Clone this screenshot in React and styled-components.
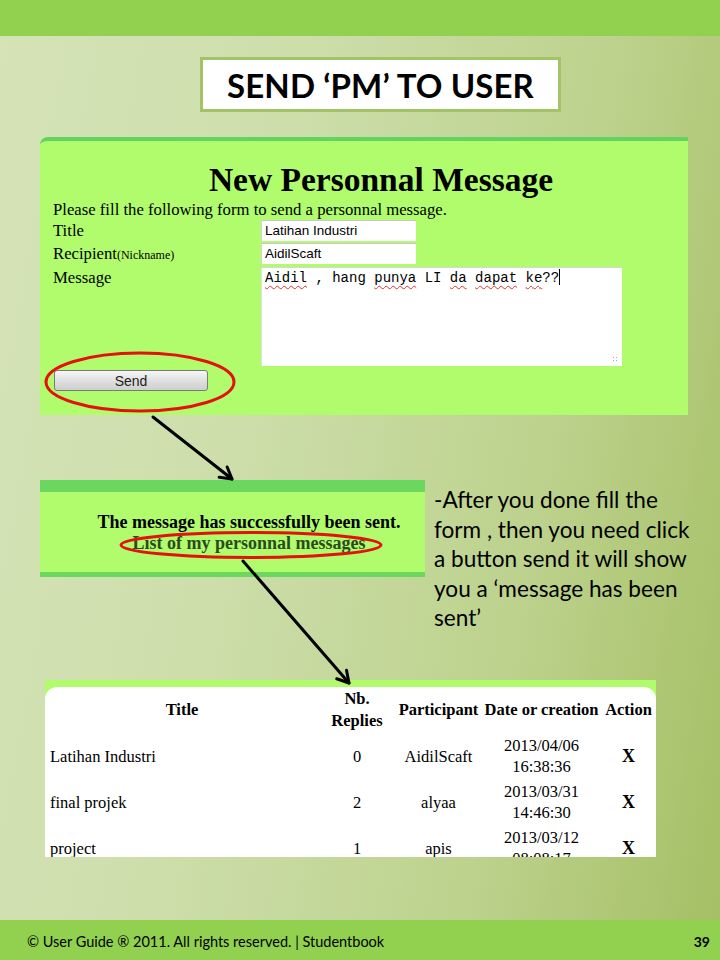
import React from 'react';
import styled, { createGlobalStyle } from 'styled-components';

const Global = createGlobalStyle`
  html, body { margin: 0; padding: 0; }
  body { width: 720px; height: 960px; overflow: hidden; }
`;

const Slide = styled.div`
  position: relative;
  width: 720px;
  height: 960px;
  display: flex;
  flex-direction: column;
  background: linear-gradient(100deg, #d5e3b7 0%, #cddeab 35%, #bdd28d 70%, #a4bf64 100%);
  font-family: Lato, "Liberation Sans", sans-serif;
  color: #000;
`;

const TopBar = styled.div`
  height: 36px;
  flex-shrink: 0;
  background: #92d050;
`;

const Content = styled.main`
  flex: 1;
  display: flex;
  flex-direction: column;
`;

const TitleBox = styled.h1`
  margin: 21px 0 0 200px;
  width: 361px;
  height: 55px;
  box-sizing: border-box;
  border: 3px solid #a3c367;
  background: #fff;
  display: flex;
  align-items: center;
  justify-content: center;
  font: 700 33px Lato, sans-serif;
  letter-spacing: 0.1px;
`;

const FormPanel = styled.section`
  margin: 25px 0 0 40px;
  width: 648px;
  height: 278px;
  box-sizing: border-box;
  background: #b0fc6c;
  border-top: 4px solid #62d35c;
  border-top-left-radius: 8px;
  padding: 19px 0 0 13px;
  font-family: "Liberation Serif", serif;
`;

const FormHeading = styled.h2`
  margin: 0;
  padding-left: 21px;
  text-align: center;
  font: 700 33.5px/40px "Liberation Serif", serif;
`;

const Intro = styled.p`
  margin: 0;
  font: 16.7px/20px "Liberation Serif", serif;
`;

const FieldGrid = styled.div`
  display: grid;
  grid-template-columns: 208px auto;
  row-gap: 1px;
  align-items: start;
`;

const Label = styled.label`
  font: 16.7px/21px "Liberation Serif", serif;
`;

const Small = styled.span`
  font-size: 12px;
`;

const TextInput = styled.div`
  width: 155px;
  height: 21px;
  box-sizing: border-box;
  background: #fff;
  border-top: 1px solid #c9c9c9;
  border-left: 1px solid #d6d6d6;
  padding: 0 3px;
  font: 13.5px/20px "Liberation Sans", Arial, sans-serif;
  margin-bottom: ${p => p.$gap || 0}px;
`;

const TextArea = styled.div`
  position: relative;
  width: 361px;
  height: 99px;
  box-sizing: border-box;
  background: #fff;
  border-top: 1px solid #d6d6d6;
  border-left: 1px solid #e0e0e0;
  padding: 1px 3px;
  font: 14px/18px "Liberation Mono", monospace;
  white-space: pre;
`;

const Squiggle = styled.span`
  text-decoration: underline wavy #e03030;
  text-decoration-thickness: 1px;
  text-underline-offset: 3px;
`;

const Caret = styled.span`
  display: inline-block;
  width: 1px;
  height: 16px;
  background: #000;
  vertical-align: -3px;
`;

const Grip = styled.span`
  position: absolute;
  right: 3px;
  bottom: 3px;
  width: 7px;
  height: 7px;
  background: radial-gradient(circle, #aaa 0.8px, transparent 1px) 0 0 / 3px 3px;
`;

const SendButton = styled.button`
  margin: 4px 0 0 1px;
  width: 154px;
  height: 21px;
  box-sizing: border-box;
  border: 1px solid #7a7a7a;
  border-radius: 3px;
  background: linear-gradient(#f6f6f6, #dedede 55%, #cfcfcf);
  font: 14px/18px "Liberation Sans", Arial, sans-serif;
  color: #222;
  padding: 0;
`;

const MiddleRow = styled.div`
  margin-top: 65px;
  height: 200px;
  display: flex;
  align-items: flex-start;
`;

const SentPanel = styled.section`
  margin-left: 40px;
  width: 385px;
  height: 97px;
  flex-shrink: 0;
  box-sizing: border-box;
  background: #b0fc6c;
  border-top: 12px solid #6cd75f;
  border-bottom: 5px solid #6cd75f;
  padding: 20px 0 0 33px;
  text-align: center;
  font: 700 18px/21px "Liberation Serif", serif;
  white-space: nowrap;
`;

const SentLine = styled.div`
  color: ${p => p.$color || '#000'};
`;

const Note = styled.p`
  margin: 5px 0 0 9px;
  width: 262px;
  font: 22.6px/29.5px Lato, sans-serif;
`;

const TablePanel = styled.section`
  margin-left: 45px;
  width: 611px;
  height: 177px;
  box-sizing: border-box;
  background: #b0fc6c;
  padding-top: 7px;
  overflow: hidden;
`;

const TableInner = styled.div`
  height: 100%;
  background: #fff;
  border-radius: 12px 12px 0 0;
  overflow: hidden;
`;

const Table = styled.table`
  width: 100%;
  table-layout: fixed;
  border-collapse: collapse;
  font: 16.5px/21px "Liberation Serif", serif;
`;

const Th = styled.th`
  height: 46px;
  padding: 0 1px;
  font-weight: 700;
  text-align: center;
  vertical-align: middle;
  line-height: 22px;
  white-space: nowrap;
`;

const Td = styled.td`
  height: 46px;
  padding: 0 3px 0 ${p => (p.$align === 'left' ? 5 : 3)}px;
  text-align: ${p => p.$align || 'center'};
  vertical-align: middle;
  font-weight: ${p => (p.$bold ? 700 : 400)};
  font-size: ${p => (p.$bold ? '18px' : '16.5px')};
`;

const Footer = styled.footer`
  height: 40px;
  flex-shrink: 0;
  background: #92d050;
  display: flex;
  align-items: center;
  justify-content: space-between;
  padding: 2px 10px 0 27px;
  box-sizing: border-box;
  font: 14.5px Lato, sans-serif;
`;

const PageNum = styled.span`
  font-weight: 700;
  font-size: 14px;
`;

const Overlay = styled.svg`
  position: absolute;
  left: 0;
  top: 0;
  pointer-events: none;
`;

function Arrow({ x1, y1, x2, y2 }) {
  const dx = x2 - x1;
  const dy = y2 - y1;
  const len = Math.hypot(dx, dy);
  const ux = dx / len;
  const uy = dy / len;
  const h = 13;
  const a = Math.PI / 6;
  const p1 = [x2 - h * (ux * Math.cos(a) - uy * Math.sin(a)), y2 - h * (uy * Math.cos(a) + ux * Math.sin(a))];
  const p2 = [x2 - h * (ux * Math.cos(a) + uy * Math.sin(a)), y2 - h * (uy * Math.cos(a) - ux * Math.sin(a))];
  return (
    <g stroke="#000" strokeWidth="3" fill="none" strokeLinecap="round" strokeLinejoin="round">
      <line x1={x1} y1={y1} x2={x2} y2={y2} />
      <polyline points={`${p1[0]},${p1[1]} ${x2},${y2} ${p2[0]},${p2[1]}`} />
    </g>
  );
}

const rows = [
  { t: 'Latihan Industri', n: '0', p: 'AidilScaft', d: '2013/04/06', h: '16:38:36' },
  { t: 'final projek', n: '2', p: 'alyaa', d: '2013/03/31', h: '14:46:30' },
  { t: 'project', n: '1', p: 'apis', d: '2013/03/12', h: '08:08:17' },
];

export default function App() {
  return (
    <>
      <Global />
      <Slide>
        <TopBar />
        <Content>
          <TitleBox>SEND ‘PM’ TO USER</TitleBox>

          <FormPanel>
            <FormHeading>New Personnal Message</FormHeading>
            <Intro>Please fill the following form to send a personnal message.</Intro>
            <FieldGrid>
              <Label>Title</Label>
              <TextInput $gap={1}>Latihan Industri</TextInput>
              <Label>Recipient<Small>(Nickname)</Small></Label>
              <TextInput>AidilScaft</TextInput>
              <Label>Message</Label>
              <TextArea>
                <Squiggle>Aidil</Squiggle> , hang <Squiggle>punya</Squiggle> LI <Squiggle>da</Squiggle> <Squiggle>dapat</Squiggle> <Squiggle>ke</Squiggle>??<Caret />
                <Grip />
              </TextArea>
            </FieldGrid>
            <SendButton>Send</SendButton>
          </FormPanel>

          <MiddleRow>
            <SentPanel>
              <SentLine>The message has successfully been sent.</SentLine>
              <SentLine $color="#2b4a1c">List of my personnal messages</SentLine>
            </SentPanel>
            <Note>-After you done fill the form , then you need click a button send it will show you a ‘message has been sent’</Note>
          </MiddleRow>

          <TablePanel>
            <TableInner>
              <Table>
                <colgroup>
                  <col style={{ width: 274 }} />
                  <col style={{ width: 76 }} />
                  <col style={{ width: 87 }} />
                  <col style={{ width: 119 }} />
                  <col />
                </colgroup>
                <thead>
                  <tr>
                    <Th>Title</Th>
                    <Th>Nb.<br />Replies</Th>
                    <Th>Participant</Th>
                    <Th>Date or creation</Th>
                    <Th>Action</Th>
                  </tr>
                </thead>
                <tbody>
                  {rows.map(r => (
                    <tr key={r.t}>
                      <Td $align="left">{r.t}</Td>
                      <Td>{r.n}</Td>
                      <Td>{r.p}</Td>
                      <Td>{r.d}<br />{r.h}</Td>
                      <Td $bold>X</Td>
                    </tr>
                  ))}
                </tbody>
              </Table>
            </TableInner>
          </TablePanel>
        </Content>
        <Footer>
          <span>© User Guide ® 2011. All rights reserved. | Studentbook</span>
          <PageNum>39</PageNum>
        </Footer>

        <Overlay width="720" height="960" viewBox="0 0 720 960">
          <ellipse cx="140" cy="382" rx="94" ry="29" fill="none" stroke="#e3120e" strokeWidth="3" />
          <ellipse cx="251" cy="545" rx="130" ry="12.5" fill="none" stroke="#e3120e" strokeWidth="3" />
          <Arrow x1={153} y1={417} x2={232} y2={479} />
          <Arrow x1={243} y1={561} x2={349} y2={683} />
        </Overlay>
      </Slide>
    </>
  );
}
